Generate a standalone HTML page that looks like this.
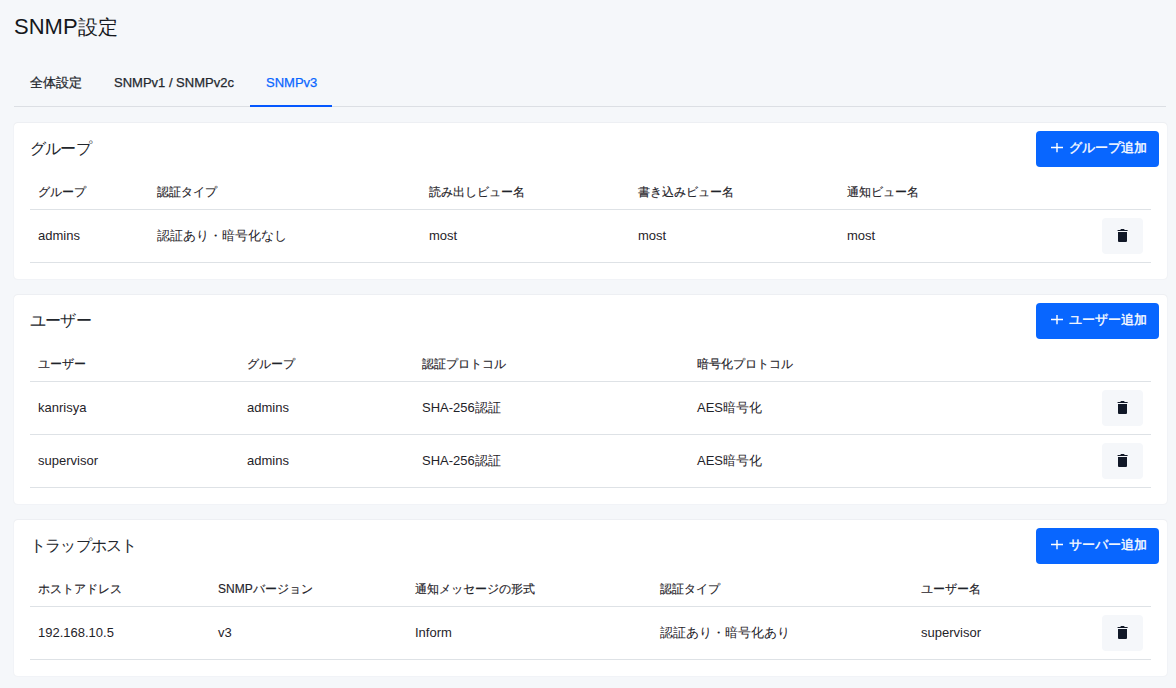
<!DOCTYPE html>
<html lang="ja">
<head>
<meta charset="utf-8">
<style>
*{box-sizing:border-box;margin:0;padding:0}
html,body{width:1176px;height:688px;overflow:hidden}
body{background:#f5f7fa;font-family:"Liberation Sans",sans-serif;color:#2b2f36;position:relative}
h1{position:absolute;left:14px;top:13px;font-size:22px;font-weight:400;color:#15181d;line-height:28px;white-space:nowrap}
h1 .j{font-size:20px;vertical-align:0px}
.tabs{position:absolute;left:14px;top:60px;width:1152px;height:47px;border-bottom:1px solid #dcdfe4}
.tab{position:absolute;top:0;height:47px;line-height:46px;font-size:13px;color:#24282e;white-space:nowrap;-webkit-text-stroke:0.25px currentColor}
.tab.active{color:#0866ff;border-bottom:2px solid #0457ff}
.card{position:absolute;left:14px;width:1153px;background:#fff;border-radius:4px;box-shadow:0 0 2px rgba(20,30,50,.07),0 -1px 1px rgba(20,30,50,.02)}
.ctitle{position:absolute;left:16px;top:16px;font-size:16px;color:#22262c;line-height:20px;white-space:nowrap}
.btn{position:absolute;right:8px;top:8px;width:123px;height:36px;background:#0866ff;border-radius:4px;color:#fff;font-size:13px;line-height:36px;white-space:nowrap;font-weight:400;-webkit-text-stroke:0.35px #fff}
.btn .plus{position:absolute;left:15px;top:12px}
.btn .lbl{position:absolute;left:33px;top:-1px}
.hline{position:absolute;left:16px;width:1121px;height:1px;background:#dee2e6}
.th,.td{position:absolute;font-size:13px;color:#1f2329;white-space:nowrap;line-height:16px}
.th{top:61px;font-size:12px;-webkit-text-stroke:0.15px currentColor}
.ctitle{letter-spacing:-0.8px}
.trash{position:absolute;left:1088px;width:41px;height:36px;background:#f5f7fa;border-radius:4px}
.trash svg{position:absolute;left:15px;top:10px}
</style>
</head>
<body>
<h1>SNMP<span class="j">設定</span></h1>
<div class="tabs"><div class="tab" style="left:16px"><span class="j">全体設定</span></div><div class="tab" style="left:100px">SNMPv1 / SNMPv2c</div><div class="tab active" style="left:236px;width:82px;padding-left:16px">SNMPv3</div></div>
<div class="card" style="top:123px;height:156px">
<div class="ctitle">グループ</div>
<div class="btn"><svg class="plus" width="12" height="10" viewBox="0 0 12 10"><path d="M0 4.5h12M6 0v9.2" stroke="#fff" stroke-width="1.4"/></svg><span class="lbl">グループ追加</span></div>
<div class="th" style="left:24px"><span class="j">グループ</span></div><div class="th" style="left:143px"><span class="j">認証タイプ</span></div><div class="th" style="left:415px"><span class="j">読み出しビュー名</span></div><div class="th" style="left:624px"><span class="j">書き込みビュー名</span></div><div class="th" style="left:833px"><span class="j">通知ビュー名</span></div>
<div class="hline" style="top:86px"></div>
<div class="td" style="left:24px;top:105px">admins</div><div class="td" style="left:143px;top:105px"><span class="j">認証あり・暗号化なし</span></div><div class="td" style="left:415px;top:105px">most</div><div class="td" style="left:624px;top:105px">most</div><div class="td" style="left:833px;top:105px">most</div>
<div class="trash" style="top:95px"><svg width="12" height="14" viewBox="0 0 12 14"><path fill="#111827" d="M3.5 1.4Q3.5 1 4 1h3Q7.5 1 7.5 1.4V2h-4zM.6 2h10v1.1H.6zM1 4h9v9q0 1-1 1H2q-1 0-1-1z"/></svg></div>
<div class="hline" style="top:139px"></div>
</div>
<div class="card" style="top:295px;height:209px">
<div class="ctitle">ユーザー</div>
<div class="btn"><svg class="plus" width="12" height="10" viewBox="0 0 12 10"><path d="M0 4.5h12M6 0v9.2" stroke="#fff" stroke-width="1.4"/></svg><span class="lbl">ユーザー追加</span></div>
<div class="th" style="left:24px"><span class="j">ユーザー</span></div><div class="th" style="left:233px"><span class="j">グループ</span></div><div class="th" style="left:408px"><span class="j">認証プロトコル</span></div><div class="th" style="left:683px"><span class="j">暗号化プロトコル</span></div>
<div class="hline" style="top:86px"></div>
<div class="td" style="left:24px;top:105px">kanrisya</div><div class="td" style="left:233px;top:105px">admins</div><div class="td" style="left:408px;top:105px">SHA-256<span class="j">認証</span></div><div class="td" style="left:683px;top:105px">AES<span class="j">暗号化</span></div>
<div class="trash" style="top:95px"><svg width="12" height="14" viewBox="0 0 12 14"><path fill="#111827" d="M3.5 1.4Q3.5 1 4 1h3Q7.5 1 7.5 1.4V2h-4zM.6 2h10v1.1H.6zM1 4h9v9q0 1-1 1H2q-1 0-1-1z"/></svg></div>
<div class="hline" style="top:139px"></div>
<div class="td" style="left:24px;top:158px">supervisor</div><div class="td" style="left:233px;top:158px">admins</div><div class="td" style="left:408px;top:158px">SHA-256<span class="j">認証</span></div><div class="td" style="left:683px;top:158px">AES<span class="j">暗号化</span></div>
<div class="trash" style="top:148px"><svg width="12" height="14" viewBox="0 0 12 14"><path fill="#111827" d="M3.5 1.4Q3.5 1 4 1h3Q7.5 1 7.5 1.4V2h-4zM.6 2h10v1.1H.6zM1 4h9v9q0 1-1 1H2q-1 0-1-1z"/></svg></div>
<div class="hline" style="top:192px"></div>
</div>
<div class="card" style="top:520px;height:156px">
<div class="ctitle">トラップホスト</div>
<div class="btn"><svg class="plus" width="12" height="10" viewBox="0 0 12 10"><path d="M0 4.5h12M6 0v9.2" stroke="#fff" stroke-width="1.4"/></svg><span class="lbl">サーバー追加</span></div>
<div class="th" style="left:24px"><span class="j">ホストアドレス</span></div><div class="th" style="left:204px">SNMP<span class="j">バージョン</span></div><div class="th" style="left:401px"><span class="j">通知メッセージの形式</span></div><div class="th" style="left:646px"><span class="j">認証タイプ</span></div><div class="th" style="left:907px"><span class="j">ユーザー名</span></div>
<div class="hline" style="top:86px"></div>
<div class="td" style="left:24px;top:105px">192.168.10.5</div><div class="td" style="left:204px;top:105px">v3</div><div class="td" style="left:401px;top:105px">Inform</div><div class="td" style="left:646px;top:105px"><span class="j">認証あり・暗号化あり</span></div><div class="td" style="left:907px;top:105px">supervisor</div>
<div class="trash" style="top:95px"><svg width="12" height="14" viewBox="0 0 12 14"><path fill="#111827" d="M3.5 1.4Q3.5 1 4 1h3Q7.5 1 7.5 1.4V2h-4zM.6 2h10v1.1H.6zM1 4h9v9q0 1-1 1H2q-1 0-1-1z"/></svg></div>
<div class="hline" style="top:139px"></div>
</div>
</body>
</html>
